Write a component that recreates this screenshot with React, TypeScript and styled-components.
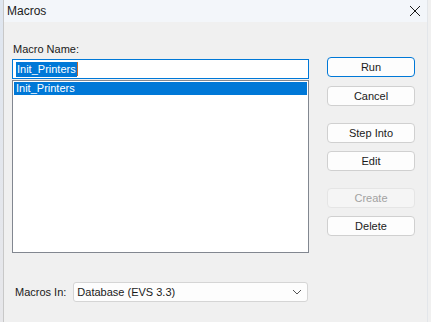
import styled, { createGlobalStyle } from "styled-components";

const GlobalStyle = createGlobalStyle`
  html, body {
    margin: 0;
    padding: 0;
    background: #f0f0f0;
  }
  * {
    box-sizing: border-box;
  }
`;

const Page = styled.div`
  display: flex;
  width: 431px;
  height: 322px;
  overflow: hidden;
  font-family: "Segoe UI", "Liberation Sans", sans-serif;
  font-size: 11px;
  color: #1a1a1a;
`;

const BehindStrip = styled.div`
  width: 3px;
  background: linear-gradient(#dfe6f0, #e7e7ea);
`;

const Window = styled.div`
  flex: 1;
  display: flex;
  flex-direction: column;
  border-left: 1px solid #c8c8c8;
  border-right: 1px solid #e3e6ea;
  margin-right: 3px;
  background: #f0f0f0;
`;

const TitleBar = styled.div`
  height: 22px;
  display: flex;
  align-items: center;
  justify-content: space-between;
  padding: 0 6px 0 3px;
  background: #f3f6fa;
`;

const Title = styled.span`
  font-size: 12px;
  color: #1b1b1b;
`;

const Body = styled.div`
  flex: 1;
  display: flex;
  flex-direction: column;
  padding: 0 0 0 8px;
`;

const Columns = styled.div`
  display: grid;
  grid-template-columns: 297px 88px;
  column-gap: 18px;
`;

const LeftColumn = styled.div`
  display: flex;
  flex-direction: column;
  padding-top: 19px;
`;

const Label = styled.label`
  line-height: 16px;
  height: 18px;
  padding-left: 1px;
`;

const NameInput = styled.div`
  height: 20px;
  border: 1px solid #0078d7;
  background: #ffffff;
  display: flex;
  align-items: center;
  padding-left: 3px;
`;

const Selected = styled.span`
  background: #0078d7;
  color: #ffffff;
  line-height: 15px;
  padding: 0 1px;
`;

const Caret = styled.span`
  width: 1px;
  height: 14px;
  background: #c56b2a;
`;

const List = styled.div`
  margin-top: 1px;
  height: 173px;
  border: 1px solid #828790;
  background: #ffffff;
  padding: 1px;
`;

const ListItem = styled.div<{ $active?: boolean }>`
  height: 13px;
  line-height: 13px;
  padding-left: 2px;
  background: ${(p) => (p.$active ? "#0078d7" : "transparent")};
  color: ${(p) => (p.$active ? "#ffffff" : "#1a1a1a")};
`;

const ButtonColumn = styled.div`
  display: flex;
  flex-direction: column;
  padding-top: 35px;
`;

const Button = styled.button<{ $primary?: boolean; $gap?: number }>`
  height: 20px;
  margin-top: ${(p) => p.$gap ?? 0}px;
  font: inherit;
  color: inherit;
  background: #fdfdfd;
  border: 1px solid ${(p) => (p.$primary ? "#0078d7" : "#d0d0d0")};
  border-radius: 4px;
  padding: 0;
  &:disabled {
    background: #f5f5f5;
    border-color: #e5e5e5;
    color: #a2a2a2;
  }
`;

const BottomRow = styled.div`
  display: flex;
  align-items: center;
  margin-top: 29px;
  padding-left: 3px;
  gap: 7px;
`;

const Select = styled.div`
  width: 235px;
  height: 20px;
  display: flex;
  align-items: center;
  justify-content: space-between;
  padding: 0 5px 0 3px;
  background: #fdfdfd;
  border: 1px solid #d5d5d5;
  border-radius: 3px;
`;

export default function App(): JSX.Element {
  return (
    <>
      <GlobalStyle />
      <Page>
        <BehindStrip />
        <Window>
          <TitleBar>
            <Title>Macros</Title>
            <svg width="12" height="12" viewBox="0 0 12 12">
              <path d="M1 1 L11 11 M11 1 L1 11" stroke="#1a1a1a" strokeWidth="1" />
            </svg>
          </TitleBar>
          <Body>
            <Columns>
              <LeftColumn>
                <Label>Macro Name:</Label>
                <NameInput>
                  <Selected>Init_Printers</Selected>
                  <Caret />
                </NameInput>
                <List>
                  <ListItem $active>Init_Printers</ListItem>
                </List>
              </LeftColumn>
              <ButtonColumn>
                <Button $primary>Run</Button>
                <Button $gap={9}>Cancel</Button>
                <Button $gap={17}>Step Into</Button>
                <Button $gap={8}>Edit</Button>
                <Button $gap={17} disabled>
                  Create
                </Button>
                <Button $gap={8}>Delete</Button>
              </ButtonColumn>
            </Columns>
            <BottomRow>
              <span>Macros In:</span>
              <Select>
                <span>Database (EVS 3.3)</span>
                <svg width="10" height="6" viewBox="0 0 10 6">
                  <path d="M1 1 L5 5 L9 1" stroke="#555" strokeWidth="1" fill="none" />
                </svg>
              </Select>
            </BottomRow>
          </Body>
        </Window>
      </Page>
    </>
  );
}
